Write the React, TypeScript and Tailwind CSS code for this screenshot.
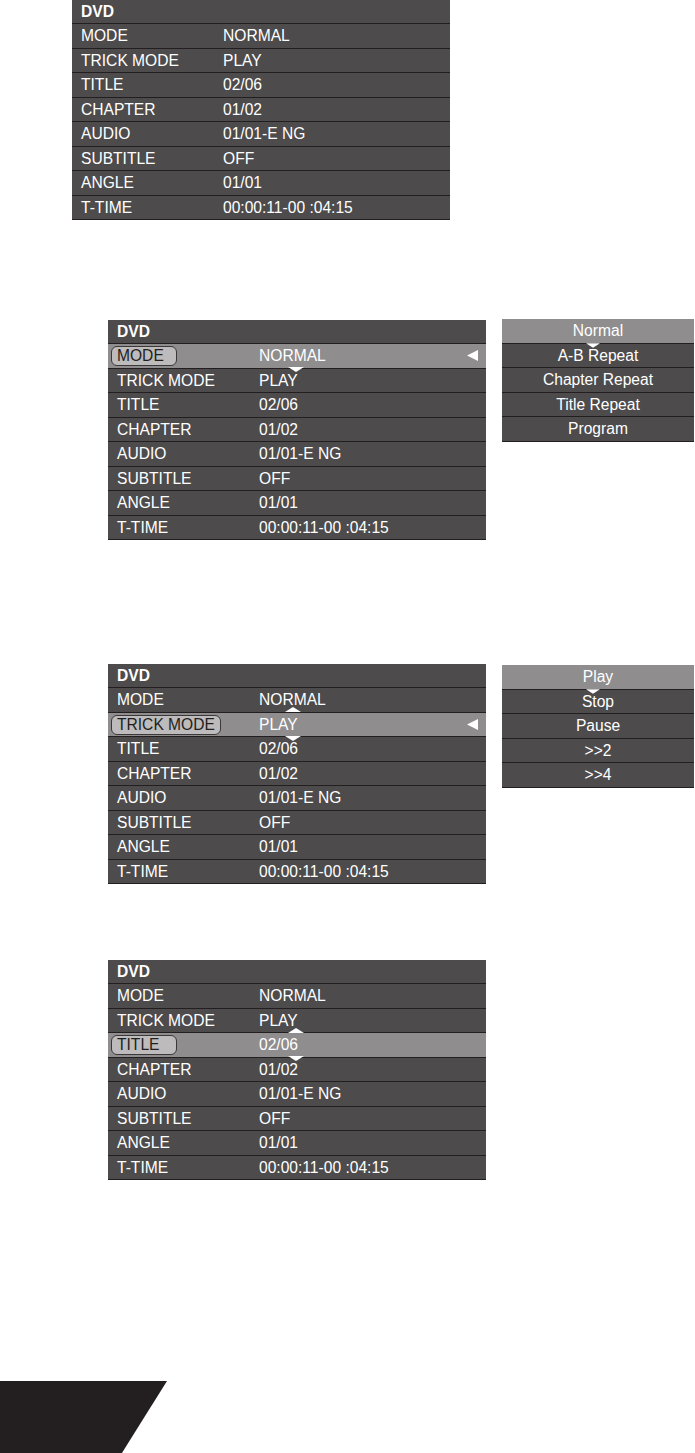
const rows = [
  ['MODE', 'NORMAL'],
  ['TRICK MODE', 'PLAY'],
  ['TITLE', '02/06'],
  ['CHAPTER', '01/02'],
  ['AUDIO', '01/01-E NG'],
  ['SUBTITLE', 'OFF'],
  ['ANGLE', '01/01'],
  ['T-TIME', '00:00:11-00 :04:15'],
]

function TriDown({ className }: { className: string }) {
  return (
    <svg className={`absolute ${className}`} width="16" height="5" viewBox="0 0 16 5">
      <polygon points="0,0 16,0 8,5" fill="#ffffff" />
    </svg>
  )
}

function TriUp({ className }: { className: string }) {
  return (
    <svg className={`absolute ${className}`} width="16" height="5" viewBox="0 0 16 5">
      <polygon points="0,5 16,5 8,0" fill="#ffffff" />
    </svg>
  )
}

function DvdTable({
  active = -1,
  pillW = 66,
  arrow = false,
  children,
}: {
  active?: number
  pillW?: number
  arrow?: boolean
  children?: React.ReactNode
}) {
  return (
    <div className="relative w-[378px] bg-[#4d4b4c] border-b border-[#231f20] text-white">
      <div className="h-[23px] flex items-center pl-[9px] font-bold">DVD</div>
      {rows.map(([label, value], i) => (
        <div
          key={label}
          className={`relative h-[24.5px] border-t border-[#231f20] flex items-center ${i === active ? 'bg-[#8f8d8e]' : ''}`}
        >
          {i === active && (
            <div
              className="absolute left-[3px] top-[2px] h-[20px] rounded-[6px] border border-[#3a3839] bg-[#bdbbbc]"
              style={{ width: pillW }}
            />
          )}
          <div className={`relative w-[151px] shrink-0 pl-[9px] pt-[1px] ${i === active ? 'text-[#231f20]' : ''}`}>
            {label}
          </div>
          <div className="flex-1 pt-[1px]">{value}</div>
          {i === active && arrow && (
            <svg className="mr-[8px]" width="11" height="11" viewBox="0 0 11 11">
              <polygon points="11,0 11,11 0,5.5" fill="#ffffff" />
            </svg>
          )}
        </div>
      ))}
      {children}
    </div>
  )
}

function SideMenu({ items }: { items: string[] }) {
  return (
    <div className="relative w-[192px] bg-[#4d4b4c] border-b border-[#231f20] text-white">
      {items.map((item, i) => (
        <div
          key={item}
          className={`flex items-center justify-center pt-[1px] ${
            i === 0 ? 'h-[23.5px] bg-[#8f8d8e]' : 'h-[24.5px] border-t border-[#231f20]'
          }`}
        >
          {item}
        </div>
      ))}
      <TriDown className="left-[84px] top-[24px] w-[14px]" />
    </div>
  )
}

export default function App() {
  return (
    <div className="relative w-[695px] h-[1453px] bg-white flex flex-col font-['Liberation_Sans',Arial,sans-serif] text-[15.6px] leading-none overflow-hidden">
      <div className="ml-[72px]">
        <DvdTable />
      </div>

      <div className="mt-[100px] flex items-start">
        <div className="ml-[108px]">
          <DvdTable active={0} pillW={66} arrow>
            <TriDown className="left-[180px] top-[47px]" />
          </DvdTable>
        </div>
        <div className="ml-[16px] -mt-[1px]">
          <SideMenu items={['Normal', 'A-B Repeat', 'Chapter Repeat', 'Title Repeat', 'Program']} />
        </div>
      </div>

      <div className="mt-[124px] flex items-start">
        <div className="ml-[108px]">
          <DvdTable active={1} pillW={110} arrow>
            <TriUp className="left-[177px] top-[43px]" />
            <TriDown className="left-[177px] top-[72px]" />
          </DvdTable>
        </div>
        <div className="ml-[16px] mt-[1px]">
          <SideMenu items={['Play', 'Stop', 'Pause', '>>2', '>>4']} />
        </div>
      </div>

      <div className="mt-[76px] ml-[108px]">
        <DvdTable active={2} pillW={66}>
          <TriUp className="left-[180px] top-[68px]" />
          <TriDown className="left-[180px] top-[96px]" />
        </DvdTable>
      </div>

      <div className="mt-auto h-[72px] w-[167px] bg-[#231f20] [clip-path:polygon(0_0,100%_0,73%_100%,0_100%)]" />
    </div>
  )
}
